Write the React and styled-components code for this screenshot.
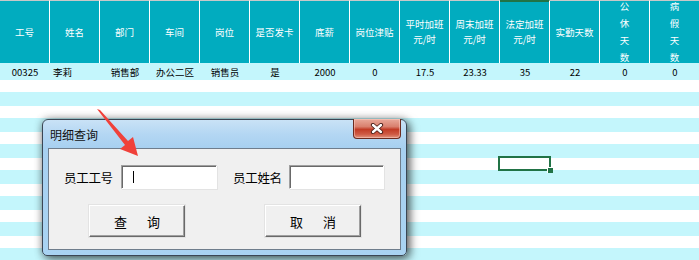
import styled, { createGlobalStyle } from "styled-components";

const GlobalStyle = createGlobalStyle`
  html, body {
    margin: 0;
    padding: 0;
    background: #ffffff;
    overflow: hidden;
  }
  body {
    font-family: "Noto Sans CJK SC", "Liberation Sans", sans-serif;
  }
`;

const Page = styled.div`
  position: relative;
  width: 699px;
  height: 260px;
  overflow: hidden;
`;

const Sheet = styled.div`
  width: 700px;
  display: flex;
  flex-direction: column;
`;

const Row = styled.div`
  display: grid;
  grid-template-columns: repeat(14, 50px);
`;

const HeadCell = styled.div`
  box-sizing: border-box;
  height: 63px;
  background: #01acbf;
  border-right: 1px solid #ffffff;
  border-top: 1px solid ${(p) => (p.$selected ? "#217346" : "#c8c8c8")};
  box-shadow: ${(p) => (p.$selected ? "inset 0 1px 0 #217346" : "none")};
  color: #ffffff;
  font-size: 9.5px;
  line-height: 15px;
  display: flex;
  align-items: center;
  justify-content: center;
  text-align: center;
  white-space: pre-line;
  overflow: hidden;
`;

const TallText = styled.span`
  line-height: 17px;
`;

const DataCell = styled.div`
  box-sizing: border-box;
  height: 17px;
  background: #c4f6fc;
  color: #000000;
  font-size: 9.5px;
  display: flex;
  align-items: center;
  justify-content: ${(p) => (p.$left ? "flex-start" : "center")};
  padding-left: ${(p) => (p.$left ? "3px" : "0")};
`;

const Stripes = styled.div`
  height: 180px;
  background: repeating-linear-gradient(
    to bottom,
    #ffffff 0px,
    #ffffff 12px,
    #c4f6fc 12px,
    #c4f6fc 26px
  );
`;

const SelectedCell = styled.div`
  position: absolute;
  left: 498px;
  top: 156px;
  width: 53px;
  height: 15px;
  box-sizing: border-box;
  border: 2px solid #217346;
  &::after {
    content: "";
    position: absolute;
    right: -4px;
    bottom: -4px;
    width: 5px;
    height: 5px;
    background: #217346;
    border: 1px solid #ffffff;
    border-right: none;
    border-bottom: none;
  }
`;

const Dialog = styled.div`
  position: absolute;
  left: 42px;
  top: 119px;
  width: 365px;
  height: 137px;
  box-sizing: border-box;
  border: 1px solid #3b4654;
  border-radius: 6px 6px 5px 5px;
  background: linear-gradient(
    to bottom,
    #c9e2f6 0px,
    #b4d7f3 14px,
    #a7d0f0 28px,
    #a9d3f2 100%
  );
  box-shadow: 3px 3px 10px rgba(0, 0, 0, 0.55), 0 0 8px rgba(0, 0, 0, 0.3);
  display: flex;
  flex-direction: column;
  padding: 0 5px 5px 5px;
`;

const TitleBar = styled.div`
  height: 28px;
  display: flex;
  align-items: flex-start;
  justify-content: space-between;
`;

const Title = styled.div`
  padding-top: 7px;
  padding-left: 2px;
  font-size: 12px;
  line-height: 16px;
  color: #111111;
`;

const CloseButton = styled.div`
  margin-top: -1px;
  width: 48px;
  height: 20px;
  box-sizing: border-box;
  border: 1px solid #6c2b20;
  border-top: none;
  border-radius: 0 0 4px 4px;
  background: linear-gradient(
    to bottom,
    #e9a99a 0%,
    #d9806e 40%,
    #c23c26 55%,
    #cf5a44 80%,
    #e0947f 100%
  );
  box-shadow: inset 0 0 0 1px rgba(255, 210, 200, 0.5);
  display: flex;
  align-items: center;
  justify-content: center;
`;

const Client = styled.div`
  flex: 1;
  box-sizing: border-box;
  background: #f0f0f0;
  border: 1px solid #6f7d8c;
  display: flex;
  flex-direction: column;
  padding: 16px 0 0 15px;
`;

const FieldRow = styled.div`
  display: flex;
  align-items: center;
  gap: 16px;
`;

const Field = styled.div`
  display: flex;
  align-items: center;
`;

const Label = styled.div`
  width: ${(p) => p.$width}px;
  font-size: 12.5px;
  color: #000000;
  letter-spacing: -0.3px;
`;

const TextBox = styled.div`
  position: relative;
  width: ${(p) => p.$width}px;
  height: 24px;
  box-sizing: border-box;
  background: #ffffff;
  border-top: 1px solid #a0a0a0;
  border-left: 1px solid #a0a0a0;
  border-bottom: 1px solid #ffffff;
  border-right: 1px solid #ffffff;
  box-shadow: inset 1px 1px 0 #696969, 1px 1px 0 #e3e3e3;
`;

const Caret = styled.span`
  position: absolute;
  left: 11px;
  top: 5px;
  width: 1px;
  height: 12px;
  background: #000000;
`;

const ButtonRow = styled.div`
  display: flex;
  gap: 80px;
  margin-top: 16px;
  padding-left: 25px;
`;

const Button = styled.div`
  width: 96px;
  height: 32px;
  box-sizing: border-box;
  background: #f0f0f0;
  border-top: 1px solid #ffffff;
  border-left: 1px solid #ffffff;
  border-bottom: 1px solid #696969;
  border-right: 1px solid #696969;
  box-shadow: inset -1px -1px 0 #a0a0a0, 0 0 0 1px #e3e3e3;
  display: flex;
  align-items: center;
  justify-content: center;
  gap: 20px;
  font-size: 13px;
  color: #000000;
`;

const ArrowLayer = styled.svg`
  position: absolute;
  left: 0;
  top: 0;
  pointer-events: none;
`;

const headers = [
  "工号",
  "姓名",
  "部门",
  "车间",
  "岗位",
  "是否发卡",
  "底薪",
  "岗位津贴",
  "平时加班\n元/时",
  "周末加班\n元/时",
  "法定加班\n元/时",
  "实勤天数",
  "公\n休\n天\n数",
  "病\n假\n天\n数",
];

const record = [
  "00325",
  "李莉",
  "销售部",
  "办公二区",
  "销售员",
  "是",
  "2000",
  "0",
  "17.5",
  "23.33",
  "35",
  "22",
  "0",
  "0",
];

function CloseGlyph() {
  return (
    <svg width="14" height="11" viewBox="0 0 14 11">
      <path
        d="M3 2 L11 9 M11 2 L3 9"
        stroke="#4a1d16"
        strokeWidth="4.2"
        strokeLinecap="round"
      />
      <path
        d="M3 2 L11 9 M11 2 L3 9"
        stroke="#ffffff"
        strokeWidth="2.4"
        strokeLinecap="round"
      />
    </svg>
  );
}

export default function App() {
  return (
    <>
      <GlobalStyle />
      <Page>
        <Sheet>
          <Row>
            {headers.map((h, i) => (
              <HeadCell key={h} $selected={i === 10}>
                {i >= 12 ? <TallText>{h}</TallText> : h}
              </HeadCell>
            ))}
          </Row>
          <Row>
            {record.map((v, i) => (
              <DataCell key={i} $left={i === 1}>
                {v}
              </DataCell>
            ))}
          </Row>
          <Stripes />
        </Sheet>

        <SelectedCell />

        <Dialog>
          <TitleBar>
            <Title>明细查询</Title>
            <CloseButton>
              <CloseGlyph />
            </CloseButton>
          </TitleBar>
          <Client>
            <FieldRow>
              <Field>
                <Label $width={57}>员工工号</Label>
                <TextBox $width={96}>
                  <Caret />
                </TextBox>
              </Field>
              <Field>
                <Label $width={56}>员工姓名</Label>
                <TextBox $width={95} />
              </Field>
            </FieldRow>
            <ButtonRow>
              <Button>
                <span>查</span>
                <span>询</span>
              </Button>
              <Button>
                <span>取</span>
                <span>消</span>
              </Button>
            </ButtonRow>
          </Client>
        </Dialog>

        <ArrowLayer width="699" height="260">
          <polygon
            points="97,109 100,110 128,141 133,137 138,156 120,149 125,145"
            fill="#f0413a"
          />
        </ArrowLayer>
      </Page>
    </>
  );
}
